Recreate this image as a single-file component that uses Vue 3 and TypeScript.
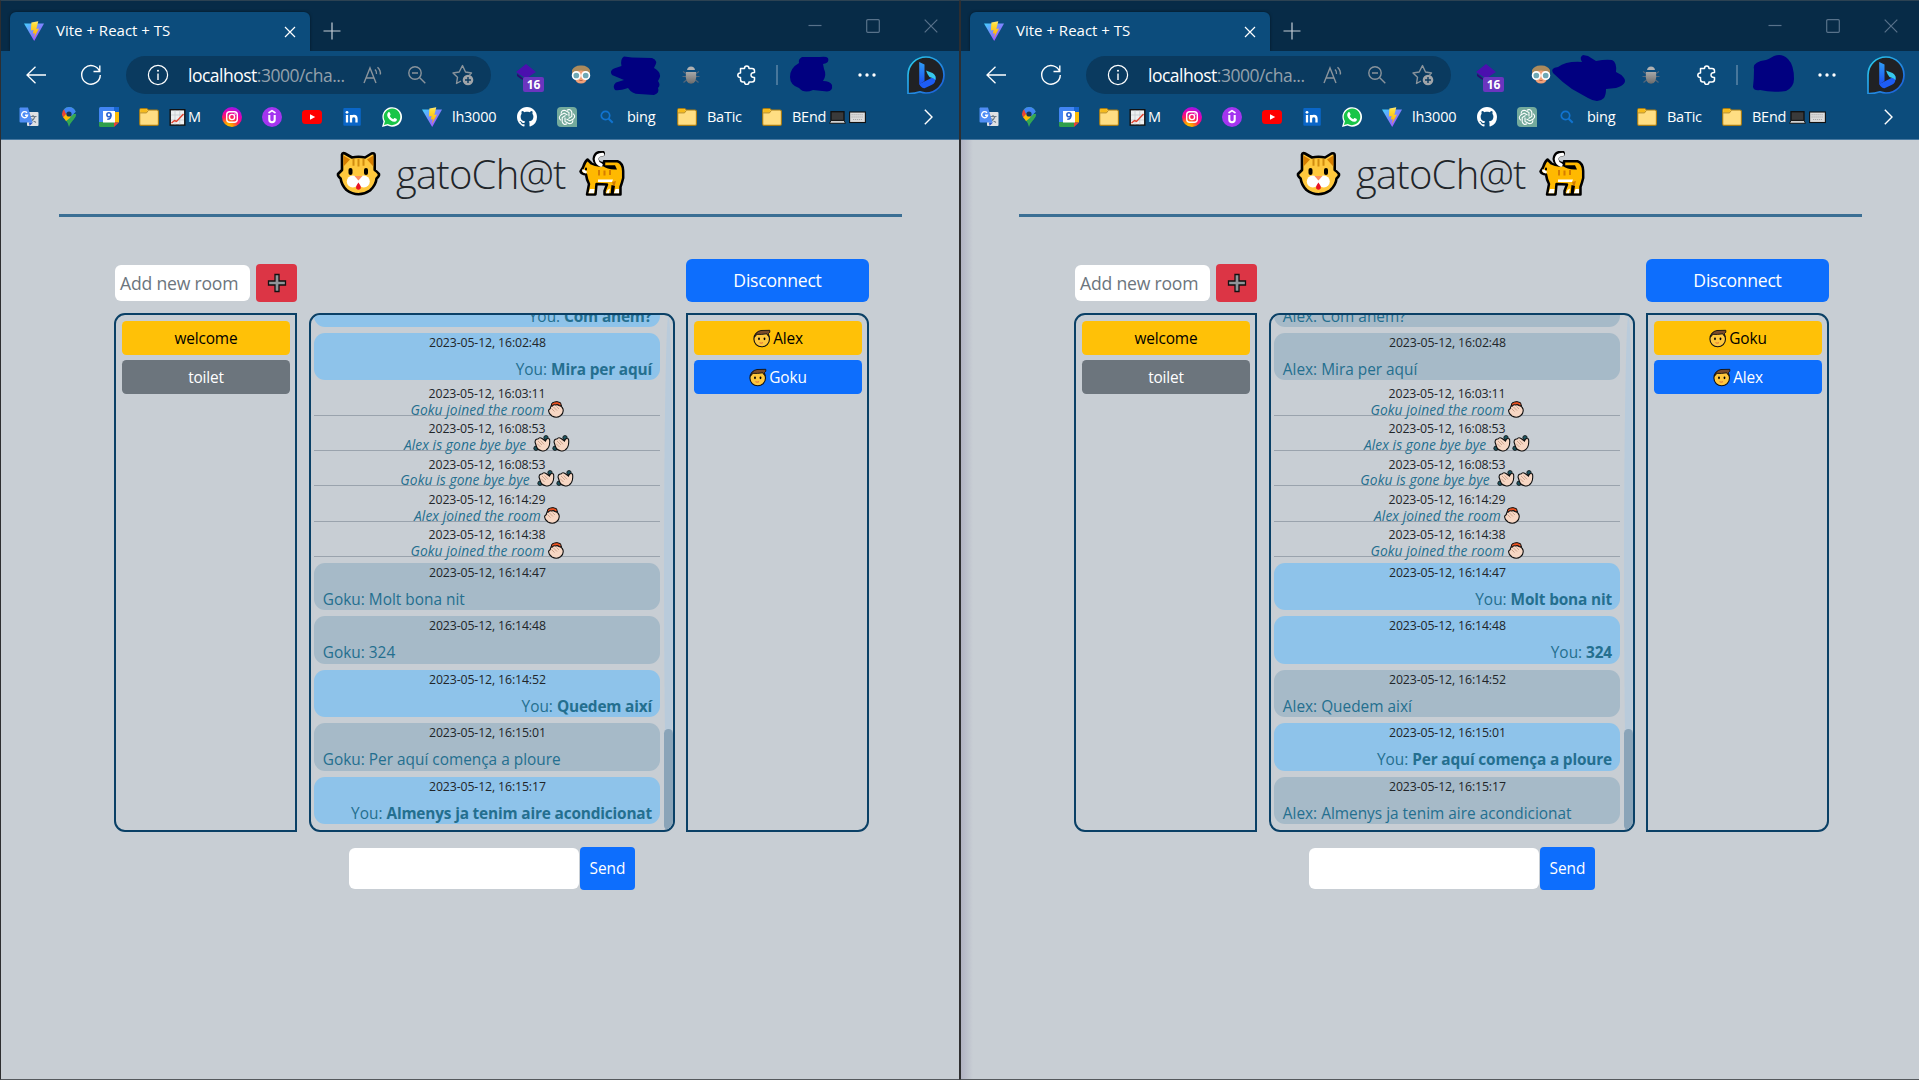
<script setup lang="ts">
interface Bookmark { icon: string; label?: string; width?: number; lead?: string; trail?: string[] }
interface LogEntry { from: string; time?: string; text?: string; event?: 'join' | 'leave' }
interface Message { kind: 'own' | 'other' | 'join' | 'leave'; time: string; who: string; text?: string }
interface User { name: string; me: boolean }
interface Pane { id: number; users: User[]; messages: Message[]; blobA: string; blobB: string }

const bookmarks: Bookmark[] = [
  { icon: 'translate' },
  { icon: 'maps' },
  { icon: 'calendar' },
  { icon: 'folder', lead: 'chart', label: 'M', width: 33 },
  { icon: 'instagram' },
  { icon: 'udemy' },
  { icon: 'youtube' },
  { icon: 'linkedin' },
  { icon: 'whatsapp' },
  { icon: 'vite', label: 'lh3000', width: 45 },
  { icon: 'github' },
  { icon: 'gpt' },
  { icon: 'search', label: 'bing', width: 30 },
  { icon: 'folder', label: 'BaTic', width: 35 },
  { icon: 'folder', label: 'BEnd', width: 74, trail: ['laptop', 'keyboard'] },
]

const log: LogEntry[] = [
  { from: 'Alex', text: 'Com anem?' },
  { from: 'Alex', time: '16:02:48', text: 'Mira per aquí' },
  { from: 'Goku', time: '16:03:11', event: 'join' },
  { from: 'Alex', time: '16:08:53', event: 'leave' },
  { from: 'Goku', time: '16:08:53', event: 'leave' },
  { from: 'Alex', time: '16:14:29', event: 'join' },
  { from: 'Goku', time: '16:14:38', event: 'join' },
  { from: 'Goku', time: '16:14:47', text: 'Molt bona nit' },
  { from: 'Goku', time: '16:14:48', text: '324' },
  { from: 'Alex', time: '16:14:52', text: 'Quedem així' },
  { from: 'Goku', time: '16:15:01', text: 'Per aquí comença a ploure' },
  { from: 'Alex', time: '16:15:17', text: 'Almenys ja tenim aire acondicionat' },
]

function viewFor(me: string): Message[] {
  return log.map((m) => ({
    kind: m.event ?? (m.from === me ? 'own' : 'other'),
    time: m.time ? `2023-05-12, ${m.time}` : '',
    who: m.from,
    text: m.text,
  }))
}

const panes: Pane[] = [
  {
    id: 1,
    users: [{ name: 'Alex', me: true }, { name: 'Goku', me: false }],
    messages: viewFor('Alex'),
    blobA: 'M34 1.500Q30 4 31.500 11L24 13.500Q19 16 22 20L34 25L26 27.500Q22 31 25 35Q29 36 38 33Q42 39 49 39L64 40Q70 38 68 33Q71 30 68 26Q72 20 68 16Q66 14 64 13Q69 5 62 3L42 2.500Z',
    blobB: 'M32 2Q28 4 29 8Q20 13 20 22Q20 30 29 33Q34 39 43 35L57 36.500Q63 36 62 30Q60 26 53 26Q57 20 54 14L53 9Q60 8 58 3Q56 1 50 2Z',
  },
  {
    id: 2,
    users: [{ name: 'Goku', me: true }, { name: 'Alex', me: false }],
    messages: viewFor('Goku'),
    blobA: 'M33 0Q29 2 32 7Q16 6 8 12Q0 13 3 18Q12 27 22 34L38 43Q48 49 54 43Q56 40 56 34L66 33Q78 29 74 23Q71 19 66 17Q67 7 62 5Q56 4 46 6L38 1Z',
    blobB: 'M44 1Q39 4 36 5Q22 7 24 14Q24 24 23 32Q24 36 30 35Q42 38 56 36Q64 32 64 24Q64 10 58 4Q52 -2 44 1Z',
  },
]
</script>

<template>
  <svg class="sprite" width="0" height="0">
    <defs>
      <linearGradient id="vg1" x1="0" y1="0" x2="1" y2="1"><stop offset="0" stop-color="#41d1ff" /><stop offset="1" stop-color="#bd34fe" /></linearGradient>
      <linearGradient id="vg2" x1="0" y1="0" x2="0" y2="1"><stop offset="0" stop-color="#ffea83" /><stop offset=".2" stop-color="#ffdd35" /><stop offset="1" stop-color="#ffa800" /></linearGradient>
      <radialGradient id="ig" cx=".3" cy="1.05" r="1.1"><stop offset="0" stop-color="#ffd500" /><stop offset=".25" stop-color="#ff9a00" /><stop offset=".5" stop-color="#ff1f5a" /><stop offset=".75" stop-color="#e800b0" /><stop offset="1" stop-color="#8a1cf0" /></radialGradient>
      <linearGradient id="bg1" x1="0" y1="0" x2="1" y2="1"><stop offset="0" stop-color="#2bd3ee" /><stop offset="1" stop-color="#1b53d8" /></linearGradient>
      <linearGradient id="bg2" x1="0" y1="0" x2="0" y2="1"><stop offset="0" stop-color="#2f9df5" /><stop offset="1" stop-color="#1a4ff0" /></linearGradient>
      <linearGradient id="bugg" x1="0" y1="0" x2="0" y2="1"><stop offset="0" stop-color="#a8a8a8" /><stop offset="1" stop-color="#6b6b6b" /></linearGradient>
    </defs>
    <symbol id="i-vite" viewBox="0 0 20 20"><path d="M0 2.600L20 2.600L10.200 20Z" fill="url(#vg1)" /><path d="M14.300 .2L7.400 1.600L6.900 9.600L9.600 9L8.800 12.600L11 12.200L9.900 17L15 7.600L12.300 8Z" fill="url(#vg2)" /></symbol>
    <symbol id="i-translate" viewBox="0 0 20 20"><rect x="8" y="5" width="11.5" height="14" rx="1" fill="#dfe1e4" /><path d="M11 9.500h6.500M14 8v1.500M16 9.500Q14.500 13.500 11.500 15M12.500 11.500Q14 14 17 15.500" stroke="#6f7f8c" stroke-width="1.200" fill="none" /><path d="M10 15.500L14 15.500L10.500 19Z" fill="#2a56c6" /><path d="M1 .5H9L13.500 15.500H1.500Q.5 15.500 .5 14.500V1.500Z" fill="#4f8df5" /><path d="M8 5.800A3 3 0 1 0 8.600 8.200H6" fill="none" stroke="#fff" stroke-width="1.400" /></symbol>
    <symbol id="i-maps" viewBox="0 0 20 20"><path d="M10 20Q9.500 16 6 12.500Q3 9 3 7H17Q17 10.500 13.800 13.500Q11 16.500 10 20Z" fill="#34a853" /><path d="M3 7Q3 4 5 2.200L10 6.500L5 11.500Q3 9 3 7Z" fill="#ea4335" /><path d="M4.200 10.300L9 5L14 9L7 14Q5.500 12 4.200 10.300Z" fill="#fbbc04" /><path d="M5 2.300Q7 0 10 0Q15 0 16.700 4.700L11 10L14 8L17 7Q17 10 14 13L8 14.700L12.500 9L7.500 5.500Z" fill="#34a853" /><path d="M5 2.300Q7 0 10 0Q15 0 16.700 4.700L12 9.500L6.500 6Z" fill="#4285f4" /><circle cx="10" cy="7" r="2.600" fill="#12375c" /></symbol>
    <symbol id="i-calendar" viewBox="0 0 20 20"><path d="M1.500 0H18.500Q20 0 20 1.500V5H0V1.500Q0 0 1.500 0Z" fill="#4285f4" /><rect y="4" width="5" height="11.500" fill="#4285f4" /><rect x="15" width="5" height="5" fill="#1967d2" /><rect x="15" y="5" width="5" height="10.500" fill="#fbbc04" /><path d="M0 15H15V20H1.500Q0 20 0 18.500Z" fill="#2e9e4b" /><path d="M15 15.500H20L15 20Z" fill="#ea4335" /><rect x="4" y="4" width="12" height="11.500" fill="#fff" /><circle cx="9.900" cy="7.800" r="2" fill="none" stroke="#2a62d0" stroke-width="1.600" /><path d="M11.900 7.800Q12.200 12.300 8.300 12.200" fill="none" stroke="#2a62d0" stroke-width="1.600" /></symbol>
    <symbol id="i-folder" viewBox="0 0 20 20"><path d="M.7 3.200Q.7 1.500 2.200 1.500H7Q8.500 1.500 9.300 3H18Q19.400 3 19.400 4.500V17Q19.400 18.400 18 18.400H2Q.7 18.400 .7 17Z" fill="#ffde83" stroke="#a87b12" stroke-width="1.100" /><path d="M1.300 3Q1.300 2 2.300 2H7Q8 2 8.700 3.500L7.500 5.500H1.300Z" fill="#f6bb1d" /><path d="M1.200 5.900H7.500L9.300 3.600" fill="none" stroke="#a87b12" stroke-width=".8" /></symbol>
    <symbol id="i-chart" viewBox="0 0 16 17"><rect x=".7" y=".7" width="14.600" height="15.400" fill="#eceff1" stroke="#111" stroke-width="1.400" /><path d="M5.500 1.500V15.500M10.300 1.500V15.500M1.500 6H14.500M1.500 11H14.500" stroke="#c3c9cc" stroke-width=".7" /><path d="M2 14L5 11.500L7 12.500L14 5" fill="none" stroke="#e2402b" stroke-width="1.400" /></symbol>
    <symbol id="i-instagram" viewBox="0 0 20 20"><circle cx="10" cy="10" r="10" fill="url(#ig)" /><rect x="4.700" y="4.700" width="10.600" height="10.600" rx="3" fill="none" stroke="#fff" stroke-width="1.400" /><circle cx="10" cy="10" r="2.600" fill="none" stroke="#fff" stroke-width="1.400" /><circle cx="13" cy="7" r=".8" fill="#fff" /></symbol>
    <symbol id="i-udemy" viewBox="0 0 20 20"><circle cx="10" cy="10" r="10" fill="#a435f0" /><path d="M6.500 6L10 3.700L13.500 6" fill="none" stroke="#fff" stroke-width="1.600" /><path d="M7.300 8V12.500Q7.300 15.200 10 15.200Q12.700 15.200 12.700 12.500V8" fill="none" stroke="#fff" stroke-width="2.100" /></symbol>
    <symbol id="i-youtube" viewBox="0 0 20 20"><rect y="3" width="20" height="14" rx="3.500" fill="#f00" /><path d="M8 7.200L13.200 10L8 12.800Z" fill="#fff" /></symbol>
    <symbol id="i-linkedin" viewBox="0 0 20 20"><rect x="1.300" y="1" width="17.500" height="17.700" rx="1" fill="#0a66c8" /><circle cx="5" cy="5.300" r="1.400" fill="#fff" /><path d="M5 8V15.500M9 8V15.500M9 11.500Q9.300 9 12 9Q14.500 9 14.500 12V15.500" fill="none" stroke="#fff" stroke-width="2.300" /></symbol>
    <symbol id="i-whatsapp" viewBox="0 0 20 20"><path d="M0 20L1.500 14.500A9.800 9.800 0 1 1 5.500 18.600Z" fill="#fff" /><path d="M1.900 18.100L3 14.300A8.300 8.300 0 1 1 5.800 17Z" fill="#19c548" /><path d="M6.300 5.200Q7.500 4.600 8 6L8.600 7.600Q8.500 8.300 7.700 9Q9 11.400 11.300 12.300Q12.300 10.800 12.800 11.100L14.800 12.100Q15.200 14.500 12.500 14.800Q8.500 14.500 6 10.500Q4.300 7.500 6.300 5.200Z" fill="#fff" /></symbol>
    <symbol id="i-github" viewBox="0 0 16 16"><path fill="#fff" d="M8 0C3.580 0 0 3.580 0 8c0 3.540 2.290 6.530 5.470 7.590.4.070.55-.17.55-.38 0-.19-.01-.82-.01-1.490-2.010.37-2.530-.49-2.690-.94-.09-.23-.48-.94-.82-1.130-.28-.15-.68-.52-.01-.53.63-.01 1.080.58 1.230.82.72 1.210 1.870.87 2.330.66.07-.52.28-.87.51-1.070-1.780-.2-3.640-.89-3.640-3.950 0-.87.31-1.590.82-2.150-.08-.2-.36-1.020.08-2.120 0 0 .67-.21 2.200.82.64-.18 1.320-.27 2-.27s1.360.09 2 .27c1.530-1.040 2.200-.82 2.200-.82.44 1.100.16 1.920.08 2.120.51.56.82 1.270.82 2.150 0 3.070-1.870 3.750-3.650 3.950.29.25.54.73.54 1.480 0 1.070-.01 1.930-.01 2.200 0 .21.15.46.55.38A8.010 8.010 0 0 0 16 8c0-4.420-3.580-8-8-8z" /></symbol>
    <symbol id="i-gpt" viewBox="0 0 20 20"><path d="M4 0H16Q20 0 20 4V20H4Q0 20 0 16V4Q0 0 4 0Z" fill="#74aa9c" /><g fill="none" stroke="#fff" stroke-width="1.100"><path v-for="a in 6" :key="a" d="M10 3.200Q13.500 1.500 14.800 5.200V9.500L11.500 11.400" :transform="`rotate(${a * 60} 10 10)`" /></g></symbol>
    <symbol id="i-search" viewBox="0 0 20 20"><circle cx="8.500" cy="8.500" r="4.200" fill="none" stroke="#1173d0" stroke-width="1.700" /><path d="M11.500 11.500L15.700 15.700" stroke="#1173d0" stroke-width="2" /></symbol>
    <symbol id="i-laptop" viewBox="0 0 17 13"><rect x="2" y=".7" width="13" height="8.800" fill="#3a3a3a" stroke="#101010" stroke-width="1.300" /><path d="M2 9.500H15L16.500 12.300H.5Z" fill="#cfcfcf" stroke="#101010" stroke-width=".9" /></symbol>
    <symbol id="i-keyboard" viewBox="0 0 17 13"><rect x=".6" y="1" width="15.800" height="10.500" fill="#dcdcdc" stroke="#111" stroke-width="1.100" /><path d="M2.500 3.700H14.500M2.500 6H14.500M4 8.500H13" stroke="#aaa" stroke-width="1" stroke-dasharray="1.200 .8" /></symbol>

    <symbol id="i-catface" viewBox="0 0 45 45"><path d="M6 3.500Q6.500 1.500 9 2.500L16 6.500Q22.500 5 29 6.500L35.500 2.500Q38.500 1.500 38.700 4V19Q41 20.500 43 23Q43.500 25 40.500 27.500Q40 34 34 39.500Q28.500 43.200 22.500 43.200Q16 43.200 10.500 39Q5.500 34 4.600 27.500Q1.500 25 2 23Q4.500 20.500 6 19Z" fill="#ffc83d" stroke="#000" stroke-width="2.600" stroke-linejoin="round" /><path d="M7.500 4.500L14 8.500L7.500 15.500ZM37.300 4.500L31 8.500L37.300 15.500Z" fill="#d67d00" /><path d="M16.500 7.700h2v7h-2zM21.500 7.500h2v8h-2zM26.500 7.700h2v7h-2z" fill="#d18c10" /><rect x="12.500" y="17" width="4" height="7" rx="2" /><rect x="28" y="17" width="4" height="7" rx="2" /><circle cx="16.800" cy="30.500" r="6" fill="#fff" /><circle cx="27.800" cy="30.500" r="6" fill="#fff" /><path d="M18.500 25H26.500L22.400 29.500Z" fill="#ff8f5a" /><path d="M22.400 31.500Q25.600 35.500 24.600 37.500Q22.400 40 20.300 37.500Q19.300 35.500 22.400 31.500Z" fill="#e81224" /></symbol>
    <symbol id="i-cat" viewBox="0 0 46 45"><path d="M23 2.500Q17 2.500 16.500 8Q17 12.500 23 14" fill="none" stroke="#000" stroke-width="6" stroke-linecap="round" /><path d="M8.500 8.500L12.500 12.500Q18 15.500 24 14H25V10.200H38.500Q44 12 44.200 20V27Q43 32 41.500 36V43.500H25.500V40L28 33.500Q23 33 17.500 33L16.500 43.500H8L10 33Q7.500 28 7 23.500Q2.500 23 1.500 20.500L4 16.500Q5.500 11 8.500 8.500Z" fill="#ffb900" stroke="#000" stroke-width="2.500" stroke-linejoin="round" /><path d="M22 14Q18 12.500 17.500 8Q18 3.500 23.500 3.500" fill="none" stroke="#fff" stroke-width="3.600" stroke-linecap="round" /><path d="M23 14.300L36 14.300L38 18.500Q29 19.300 23 14.300Z" /><path d="M19 19h2v5.500h-2zM24.500 19.500h2v5h-2zM30 19h2v5h-2z" fill="#d67d00" /><path d="M3 18.500Q7 18 8 21L7 22.500Q3 22 3 18.500Z" fill="#fff" /><rect x="6" y="16.500" width="2" height="3" rx="1" /><path d="M19 28.500H34L33 31H19Z" fill="#fff" /><path d="M33 31L37 30L35 37Z" fill="#d67d00" /><path d="M11 38H15.500L15 42.300H9.500ZM28.500 39L31 37.500L30 42.300H27ZM36.500 38H40V42.300H35Z" fill="#fff" /><path d="M32.500 34L31.500 44H34.500L36 35Z" /></symbol>
    <symbol id="i-user" viewBox="0 0 18 19"><circle cx="8.700" cy="10" r="7.800" fill="#ffc83d" stroke="#111" stroke-width="1.100" /><path d="M1.500 8Q2.500 2.500 8 1.500L16.800 1.300Q17.500 3.500 15.500 4.500L15.800 7.500Q14.500 6.500 13.800 4.800Q8 5.800 3.500 5.300Q3 7.300 1.500 8Z" fill="#7a4b2a" stroke="#111" stroke-width=".9" /><ellipse cx="6" cy="9.800" rx=".9" ry="1.400" /><ellipse cx="11.500" cy="9.800" rx=".9" ry="1.400" /><path d="M6.500 13.700Q8 14.700 10 13.700" fill="none" stroke="#e2703c" stroke-width="1" /></symbol>
    <symbol id="i-clap" viewBox="0 0 16 17"><path d="M3 5L4 2L6.500 1L9 .6L12.500 1.700L13.500 5Z" fill="#e8501f" stroke="#111" stroke-width="1" /><path d="M2.300 7.500Q2.500 4.500 4.500 5Q5.500 3.300 7.500 4Q9.500 3 11 4.500Q14 4.800 15 8Q16 12 12.500 14.800Q8.500 17.500 4 15Q0 12 .7 9Z" fill="#f7d7c4" stroke="#111" stroke-width="1.100" /><path d="M3.500 7.500L6.500 10.500M5.500 6L9 9.500M8.500 5.500L11 8" stroke="#b98e76" stroke-width=".7" /></symbol>
    <symbol id="i-wave" viewBox="0 0 18 17"><circle cx="13" cy="2.700" r="2.200" fill="#1d5560" stroke="#111" stroke-width=".8" /><circle cx="3" cy="13.300" r="2.200" fill="#1d5560" stroke="#111" stroke-width=".8" /><path d="M2 7Q2.500 3.500 5 4Q6.500 1.800 9 3.500L12.500 6Q13.500 2.500 16.500 4Q17.300 9 15.500 12.500Q12.500 17 8.500 15.800Q4.500 15 3.300 11Z" fill="#f7d7c4" stroke="#111" stroke-width="1.100" /><path d="M5 6L9 10M7.500 5.500L11 9.300M4 8.500L7.500 12" stroke="#b98e76" stroke-width=".7" /></symbol>
    <symbol id="i-plus" viewBox="0 0 20 20"><path d="M8 1.500H12V8H18.500V12H12V18.500H8V12H1.500V8H8Z" fill="#8f9498" stroke="#111" stroke-width="1.300" /></symbol>

    <symbol id="i-owl" viewBox="0 0 20 20"><path d="M1 11V5Q4 0 10 .5Q16 0 19 5V11Z" fill="#ab8a5c" /><path d="M3.500 7Q10 4 16.500 7V13Q15 18.500 10 18.500Q5 18.500 3.500 13Z" fill="#f1a077" /><circle cx="5.300" cy="10.500" r="3.700" fill="#6fa8b5" stroke="#fff" stroke-width="1.700" /><circle cx="14.700" cy="10.500" r="3.700" fill="#6fa8b5" stroke="#fff" stroke-width="1.700" /><path d="M8.500 15.500H11.500" stroke="#b5654a" /></symbol>
    <symbol id="i-bug" viewBox="0 0 18 20"><path d="M4 8.500L1 6.500M14 8.500L17 6.500M4 11.500H.5M14 11.500H17.500M4.500 15L1.500 17.500M13.500 15L16.500 17.500" stroke="#54677a" stroke-width="1.200" /><path d="M5 5Q5.500 1.500 9 1.500Q12.500 1.500 13 5Z" fill="#b0b0b0" /><path d="M4 7H14Q15.500 18.500 9 18.800Q2.500 18.500 4 7Z" fill="url(#bugg)" /></symbol>
    <symbol id="i-puzzle" viewBox="0 0 20 20"><path d="M3.500 3.500H7.500Q7.500 1 9.700 1Q12 1 12 3.500H15Q17.500 3.500 17.500 6V7.500Q14 7.300 14 10Q14 12.700 17.500 12.500V14.500Q17.500 17 15 17H12Q12 19.500 9.700 19.500Q7.500 19.500 7.500 17H6Q3.500 17 3.500 14.500V12.500Q.8 12.500 .8 10.200Q.8 8 3.500 8Z" fill="none" stroke="#fff" stroke-width="1.500" stroke-linejoin="round" /></symbol>
    <symbol id="i-bing" viewBox="0 0 38 38"><path d="M1 37.500V19A18 18 0 1 1 19 37Q16 37 13 35.800Q7 37.800 1 37.500Z" fill="#202124" stroke="url(#bg1)" stroke-width="1.700" /><path d="M12.200 6L17.500 8.500V25L12.200 28.500Z" fill="url(#bg2)" /><path d="M12.200 28L28.500 20Q29.500 27 24.500 29L17.500 32.300Q14 32 12.200 28Z" fill="#1d5cf5" /><path d="M19 14.500L25.500 17Q29.300 19 28.500 24Q27 22 22.500 21Q20.500 19 19 14.500Z" fill="#37c9ec" /></symbol>
  </svg>

  <main class="desktop">
    <section v-for="p in panes" :key="p.id" class="window">
      <div class="tabstrip">
        <div class="tab">
          <svg class="tab-icon"><use href="#i-vite" /></svg>
          <span class="tab-title">Vite + React + TS</span>
          <svg class="tab-close" viewBox="0 0 12 12"><path d="M1 1L11 11M11 1L1 11" stroke="#fff" stroke-width="1.200" /></svg>
        </div>
        <svg class="new-tab" viewBox="0 0 18 18"><path d="M9 .5V17.500M.5 9H17.500" stroke="#c5ced6" stroke-width="1.200" /></svg>
        <div class="controls">
          <svg viewBox="0 0 14 14"><path d="M.5 6.500H13.500" /></svg>
          <svg viewBox="0 0 14 14"><rect x=".7" y=".7" width="12.600" height="12.600" rx="1" /></svg>
          <svg viewBox="0 0 14 14"><path d="M.7 .7L13.300 13.300M13.300 .7L.7 13.300" /></svg>
        </div>
      </div>

      <div class="toolbar">
        <svg class="back" viewBox="0 0 20 18"><path d="M20 9H1M9.500 .7L1 9L9.500 17.300" fill="none" stroke="#fff" stroke-width="1.300" /></svg>
        <svg class="reload" viewBox="0 0 22 22"><path d="M19.800 7.800A9.300 9.300 0 1 0 20.300 11M19.800 1.500V7.500H13.500" fill="none" stroke="#fff" stroke-width="1.400" /></svg>
        <div class="address">
          <svg class="info" viewBox="0 0 22 22"><circle cx="11" cy="11" r="9.600" fill="none" stroke="#fff" stroke-width="1.200" /><path d="M11 9.500V16" stroke="#fff" stroke-width="1.400" /><circle cx="11" cy="6.700" r="1" fill="#fff" /></svg>
          <span class="url"><b>localhost</b>:3000/cha...</span>
          <svg class="read" viewBox="0 0 20 18"><path d="M1 17L7 2L13 17M3 12H11M12 3.500Q14 5.500 13.500 8M14.500 1.200Q18 4.500 17.300 8.500" fill="none" /></svg>
          <svg class="zoomout" viewBox="0 0 18 18"><circle cx="7" cy="7" r="6.200" fill="none" /><path d="M4 7H10M11.500 11.500L17.300 17.300" /></svg>
          <svg class="star" viewBox="0 0 22 22"><path d="M9 17L4.500 19.500L5.500 13.300L1 9L7.200 8L10.500 1.500L13.500 8L19.500 9L17.500 11" fill="none" stroke-linejoin="round" /><circle cx="16" cy="16" r="5.300" class="solid" /><path d="M13 16H19M16 13V19" class="cut" /></svg>
        </div>
        <div class="ext">
          <svg viewBox="0 0 20 18"><path d="M1 9.500L6 13.500L10 17Q5 16 1 12Z" fill="#2a0b73" /><path d="M10 0L20 8L10 14.500L0 8Z" fill="#4b0fae" /></svg>
          <span class="badge">16</span>
        </div>
        <svg class="owl"><use href="#i-owl" /></svg>
        <svg class="blob-a" viewBox="0 0 76 50"><path :d="p.blobA" /></svg>
        <svg class="bug"><use href="#i-bug" /></svg>
        <svg class="puzzle"><use href="#i-puzzle" /></svg>
        <i class="divider"></i>
        <svg class="blob-b" viewBox="0 0 66 40"><path :d="p.blobB" /></svg>
        <svg class="dots" viewBox="0 0 18 4"><circle cx="2" cy="2" r="1.700" /><circle cx="9" cy="2" r="1.700" /><circle cx="16" cy="2" r="1.700" /></svg>
        <svg class="bing"><use href="#i-bing" /></svg>
      </div>

      <div class="bookmarks">
        <div v-for="(b, i) in bookmarks" :key="i" class="bookmark">
          <svg class="bm-icon"><use :href="'#i-' + b.icon" /></svg>
          <span v-if="b.label" class="bm-label" :style="{ width: b.width + 'px' }">
            <svg v-if="b.lead" class="chart"><use :href="'#i-' + b.lead" /></svg>
            <span>{{ b.label }}</span>
            <svg v-for="e in b.trail" :key="e" class="bm-emoji"><use :href="'#i-' + e" /></svg>
          </span>
        </div>
        <svg class="more" viewBox="0 0 9 16"><path d="M.8 .8L8 8L.8 15.200" fill="none" stroke="#fff" stroke-width="1.400" /></svg>
      </div>

      <div class="page">
        <h1 class="title">
          <svg class="cat-face"><use href="#i-catface" /></svg>
          <span>gatoCh@t</span>
          <svg class="cat-body"><use href="#i-cat" /></svg>
        </h1>
        <div class="rule"></div>

        <div class="columns">
          <div class="side">
            <div class="head">
              <div class="room-input">Add new room</div>
              <button class="add"><svg><use href="#i-plus" /></svg></button>
            </div>
            <div class="panel left">
              <button class="pill active">welcome</button>
              <button class="pill muted">toilet</button>
            </div>
          </div>

          <div class="center">
            <div class="chat">
              <div class="messages">
                <template v-for="(m, i) in p.messages" :key="i">
                  <div v-if="m.kind === 'own' || m.kind === 'other'" class="bubble" :class="m.kind">
                    <time>{{ m.time }}</time>
                    <p v-if="m.kind === 'own'">You: <b>{{ m.text }}</b></p>
                    <p v-else>{{ m.who }}: {{ m.text }}</p>
                  </div>
                  <div v-else class="event">
                    <time>{{ m.time }}</time>
                    <p v-if="m.kind === 'join'"><em>{{ m.who }} joined the room</em><svg class="clap"><use href="#i-clap" /></svg></p>
                    <p v-else><em>{{ m.who }} is gone bye bye</em><svg class="wave first"><use href="#i-wave" /></svg><svg class="wave"><use href="#i-wave" /></svg></p>
                  </div>
                </template>
              </div>
              <div class="track"><div class="thumb"></div></div>
            </div>
            <div class="composer">
              <div class="text-input"></div>
              <button class="send">Send</button>
            </div>
          </div>

          <div class="side">
            <div class="head"><button class="disconnect">Disconnect</button></div>
            <div class="panel right">
              <button v-for="u in p.users" :key="u.name" class="pill" :class="u.me ? 'active' : 'primary'">
                <svg class="avatar"><use href="#i-user" /></svg><span>{{ u.name }}</span>
              </button>
            </div>
          </div>
        </div>
      </div>
    </section>
  </main>
</template>

<style>
body { margin: 0; overflow: hidden; background: #c8ced4; }
</style>

<style scoped>
* { box-sizing: border-box; }
svg { display: block; flex: none; overflow: visible; }
p { margin: 0; }
button { border: 0; padding: 0; margin: 0; font: inherit; }
.sprite { position: absolute; }
.desktop { display: flex; width: 1919px; height: 1080px; overflow: hidden; font-family: "Open Sans", "Noto Sans", sans-serif; color: #212529; }
.window { position: relative; width: 960px; height: 1080px; flex: none; display: flex; flex-direction: column; background: #c8ced4; overflow: hidden; }
.window::after { content: ""; position: absolute; inset: 0; border: 1px solid #2e2e30; border-top-color: #2c4252; border-bottom-color: #55595d; pointer-events: none; }
.window + .window::before { content: ""; position: absolute; left: 1px; top: 140px; bottom: 0; width: 12px; background: linear-gradient(90deg, rgba(120, 110, 150, .28), transparent); }

.tabstrip { height: 51px; background: #072b47; display: flex; align-items: flex-start; padding: 12px 0 0 10px; flex: none; }
.tab { width: 300px; height: 39px; background: #0c4c7c; border-radius: 6px 6px 0 0; display: flex; align-items: center; padding: 0 14px; box-shadow: 0 0 3px rgba(0, 0, 0, .5); }
.tab-icon { width: 20px; height: 20px; margin-bottom: 1px; }
.tab-title { margin: 0 0 4px 12px; color: #fff; font-size: 15px; }
.tab-close { width: 12px; height: 12px; margin-left: auto; margin-top: 1px; }
.new-tab { width: 18px; height: 18px; margin: 10px 0 0 13px; }
.controls { margin: 7px 22px 0 auto; display: flex; gap: 44px; }
.controls svg { width: 14px; height: 14px; fill: none; stroke: #58728a; stroke-width: 1.200; }

.toolbar { height: 48px; background: #0c4c7c; display: flex; align-items: center; padding-left: 26px; flex: none; position: relative; }
.back { width: 20px; height: 18px; }
.reload { width: 22px; height: 22px; margin-left: 34px; }
.address { width: 365px; height: 38px; border-radius: 19px; background: #0a3a5f; margin-left: 24px; display: flex; align-items: center; padding-left: 21px; }
.address .info { width: 22px; height: 22px; }
.url { width: 158px; margin-left: 19px; color: #93a0ab; font-size: 17.500px; letter-spacing: -.5px; white-space: nowrap; }
.url b { color: #fff; font-weight: 400; }
.read, .zoomout, .star { stroke: #8a949c; stroke-width: 1.400; }
.read { width: 20px; height: 18px; margin-left: 17px; }
.zoomout { width: 18px; height: 18px; margin-left: 25px; }
.star { width: 22px; height: 22px; margin-left: 26px; }
.star .solid { fill: #a0a4a8; stroke: none; }
.star .cut { stroke: #0a3a5f; }
.ext { width: 28px; height: 28px; margin-left: 25px; position: relative; padding-top: 3px; }
.ext > svg { width: 20px; height: 18px; }
.badge { position: absolute; left: 7px; top: 16px; width: 21px; height: 15px; border-radius: 2px; background: #6b35bf; color: #fff; font-size: 12px; font-weight: 700; line-height: 15px; text-align: center; }
.owl { width: 20px; height: 20px; margin-left: 27px; }
.blob-a { position: absolute; left: 590px; top: 4px; width: 76px; height: 50px; fill: #010080; z-index: 1; }
.bug { width: 18px; height: 20px; margin-left: 91px; }
.puzzle { width: 20px; height: 20px; margin-left: 37px; }
.divider { width: 2px; height: 20px; background: #48779c; margin-left: 19px; }
.blob-b { position: absolute; left: 770px; top: 4px; width: 66px; height: 40px; fill: #010080; z-index: 1; }
.dots { width: 18px; height: 4px; margin-left: 80px; fill: #fff; }
.bing { width: 38px; height: 38px; margin-left: 31px; }

.bookmarks { height: 41px; background: #0c4c7c; border-bottom: 1px solid #4878a0; display: flex; align-items: flex-start; padding: 8px 0 0 9px; flex: none; }
.bookmark { display: flex; align-items: center; padding: 0 10px; height: 20px; }
.bm-icon { width: 20px; height: 20px; }
.bm-label { display: flex; align-items: center; margin-left: 10px; color: #fff; font-size: 14.500px; letter-spacing: -.25px; line-height: 20px; white-space: nowrap; }
.chart { width: 17px; height: 17px; margin-right: 2px; }
.bm-emoji { width: 17px; height: 13px; margin-left: 3px; }
.more { width: 9px; height: 16px; margin: 2px 27px 0 auto; }

.page { flex: 1; }
.title { margin: 0; height: 74px; display: flex; padding: 12px 0 0 336px; font-size: 40px; font-weight: 300; line-height: 1; }
.cat-face { width: 45px; height: 45px; margin-top: -1px; }
.title span { margin: 2px 0 0 15px; width: 168px; letter-spacing: -.8px; white-space: nowrap; }
.cat-body { width: 46px; height: 45px; margin: -1px 0 0 15px; }
.rule { height: 3px; background: #3b6f94; margin: 0 58px 0 59px; }
.columns { display: flex; padding: 42px 0 0 114px; }
.side { width: 183px; }
.head { height: 43px; display: flex; align-items: flex-end; justify-content: space-between; }
.room-input { width: 135px; height: 36px; margin: 0 0 1px 1px; border-radius: 6px; background: #fff; color: #6c757d; font-size: 17.600px; letter-spacing: -.2px; line-height: 36px; padding-left: 5px; white-space: nowrap; }
.add { width: 41px; height: 38px; border-radius: 4px; background: #dc3545; display: flex; align-items: center; justify-content: center; }
.add svg { width: 20px; height: 20px; }
.panel { margin-top: 11px; height: 519px; border: 2px solid #0a4066; padding: 6px 5px 0 6px; display: flex; flex-direction: column; gap: 5px; }
.panel.left { border-radius: 11px 0 0 11px; }
.panel.right { border-radius: 0 11px 11px 0; }
.pill { height: 34px; border-radius: 4.400px; display: flex; align-items: center; justify-content: center; font-size: 15.400px; letter-spacing: -.15px; }
.active { background: #ffc107; color: #000; }
.muted { background: #6c757d; color: #fff; }
.primary { background: #0d6efd; color: #fff; }
.avatar { width: 18px; height: 19px; margin-right: 2px; }
.disconnect { width: 183px; height: 43px; border-radius: 6px; background: #0d6efd; color: #fff; font-size: 17.600px; letter-spacing: -.25px; padding-bottom: 2px; }

.center { width: 366px; margin: 0 11px 0 12px; padding-top: 54px; }
.chat { height: 519px; border: 2px solid #0a4066; border-radius: 11px; padding-left: 3px; display: flex; overflow: hidden; }
.messages { width: 346px; display: flex; flex-direction: column; justify-content: flex-end; padding-bottom: 5.700px; }
.bubble { height: 47.800px; margin-top: 5.700px; border-radius: 11px; padding: 1px 8px 0 8.800px; flex: none; text-align: center; }
.bubble.own { background: #8ec3ea; }
.bubble.other { background: #a6bac8; }
time { display: block; font-size: 12.300px; letter-spacing: -.12px; height: 18.400px; line-height: 18.400px; text-align: center; color: #212529; white-space: nowrap; }
.bubble p { font-size: 15.400px; line-height: 23px; margin-top: 6px; color: #246f8f; white-space: nowrap; }
.bubble b { letter-spacing: -.17px; }
.own p { text-align: right; }
.other p { text-align: left; }
.event { height: 35.300px; border-bottom: 1px solid #9aa3ad; padding-top: 4.500px; flex: none; }
.event p { display: flex; justify-content: center; font-size: 13.800px; letter-spacing: .08px; line-height: 13.600px; margin-top: -.7px; color: #246f8f; white-space: nowrap; }
.clap { width: 16px; height: 17px; margin: -2px 0 0 3px; }
.wave { width: 18px; height: 17px; margin: -3px 0 0 1px; }
.wave.first { margin-left: 7px; }
.track { width: 9px; margin-left: 4px; background: #b9cbdb; border-radius: 50%; display: flex; align-items: flex-end; }
.thumb { width: 9px; height: 101px; border-radius: 5px; background: #8aa4b8; }
.composer { display: flex; padding: 15px 0 0 40px; }
.text-input { width: 230px; height: 41px; margin: 1px 1px 0 0; background: #fff; border-radius: 6px; }
.send { width: 55px; height: 43px; border-radius: 4px; background: #0d6efd; color: #fff; font-size: 15.400px; }
</style>
